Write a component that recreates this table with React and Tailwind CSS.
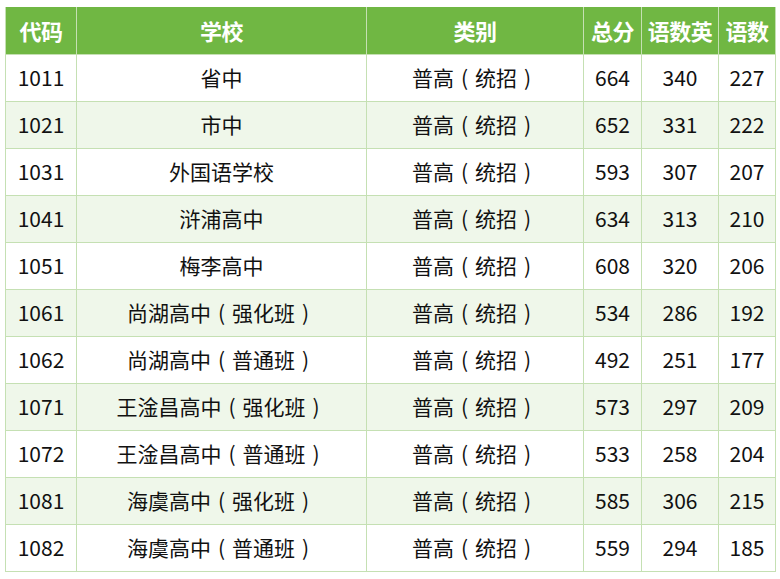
const rows = [
  ['1011', '省中', 664, 340, 227],
  ['1021', '市中', 652, 331, 222],
  ['1031', '外国语学校', 593, 307, 207],
  ['1041', '浒浦高中', 634, 313, 210],
  ['1051', '梅李高中', 608, 320, 206],
  ['1061', '尚湖高中（强化班）', 534, 286, 192],
  ['1062', '尚湖高中（普通班）', 492, 251, 177],
  ['1071', '王淦昌高中（强化班）', 573, 297, 209],
  ['1072', '王淦昌高中（普通班）', 533, 258, 204],
  ['1081', '海虞高中（强化班）', 585, 306, 215],
  ['1082', '海虞高中（普通班）', 559, 294, 185],
]

const widths = ['w-[71px]', 'w-[290px]', 'w-[217px]', 'w-[58px]', 'w-[77px]', 'w-[57px]']
const heads = ['代码', '学校', '类别', '总分', '语数英', '语数']

// full-width parens drawn centred in their em box, like the original font
function Cjk({ text }) {
  return text.split(/([（）])/).map((part, i) =>
    part === '（' || part === '）'
      ? <span key={i} className="inline-block w-[1em] text-center">{part === '（' ? '(' : ')'}</span>
      : part
  )
}

const cell = 'border border-[#c5e0b3] p-0 text-center text-[21px] text-[#111]'

export default function App() {
  return (
    <div className="w-[780px] h-[579px] bg-white pt-[7px] pl-[5px]" style={{ fontFamily: '"Noto Sans CJK SC", "Noto Sans", sans-serif' }}>
      <table className="border-collapse table-fixed w-[770px]">
        <colgroup>
          {widths.map((w, i) => <col key={i} className={w} />)}
        </colgroup>
        <thead>
          <tr className="h-[47px] bg-[#70b743]">
            {heads.map(h => (
              <th key={h} className="border-x border-[#c5e0b3] p-0 text-center text-[22px] font-bold text-white tracking-[-0.5px]">
                {h}
              </th>
            ))}
          </tr>
        </thead>
        <tbody>
          {rows.map((r, i) => (
            <tr key={r[0]} className={`h-[47px] ${i % 2 ? 'bg-[#eff7ea]' : 'bg-white'}`}>
              <td className={cell}>{r[0]}</td>
              <td className={cell}><Cjk text={r[1]} /></td>
              <td className={cell}><Cjk text="普高（统招）" /></td>
              <td className={cell}>{r[2]}</td>
              <td className={cell}>{r[3]}</td>
              <td className={cell}>{r[4]}</td>
            </tr>
          ))}
        </tbody>
      </table>
    </div>
  )
}
